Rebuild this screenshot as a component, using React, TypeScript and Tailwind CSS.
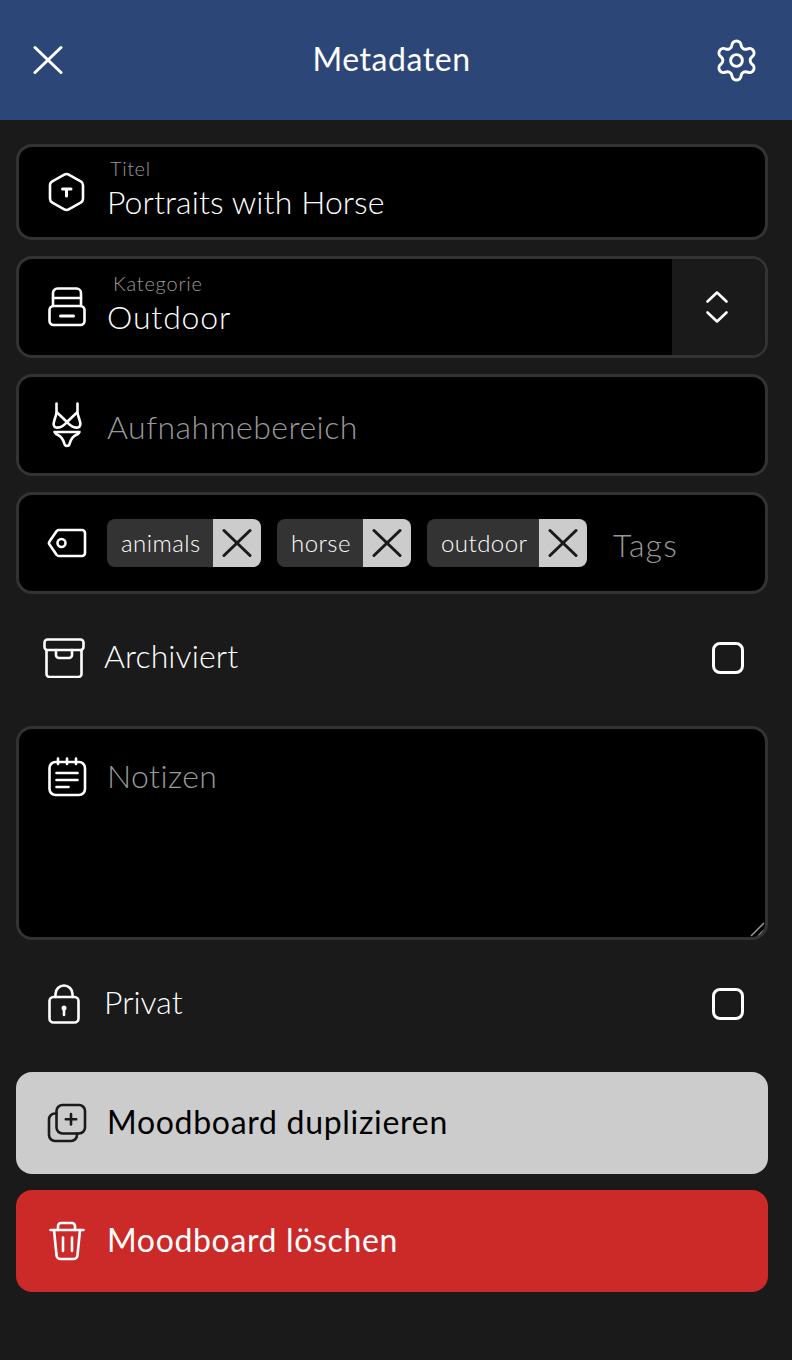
import React from "react";
import { Settings } from "lucide-react";

const S = ({ children, w = 40, h = 40, color = "#fff", sw = 2.6 }: { children: React.ReactNode; w?: number; h?: number; color?: string; sw?: number }) => (
  <svg width={w} height={h} viewBox={`0 0 ${w} ${h}`} fill="none" stroke={color} strokeWidth={sw} strokeLinecap="round" strokeLinejoin="round" className="shrink-0">
    {children}
  </svg>
);

const XIcon = ({ size = 30, color = "#fff", sw = 3 }: { size?: number; color?: string; sw?: number }) => (
  <S w={size} h={size} color={color} sw={sw}>
    <path d={`M2 2.500L${size - 2} ${size - 2.500}M${size - 2} 2.500L2 ${size - 2.500}`} />
  </S>
);

const HexT = () => (
  <S>
    <path d="M17.300 2.600a4.500 4.500 0 0 1 4.400 0l12 6.800a4.400 4.400 0 0 1 2.300 3.800v13.600a4.400 4.400 0 0 1-2.300 3.800l-12 6.800a4.500 4.500 0 0 1-4.400 0l-12-6.800a4.400 4.400 0 0 1-2.300-3.800V13.200a4.400 4.400 0 0 1 2.300-3.800z" />
    <path d="M15.500 17h8.500M19.500 17v7" strokeWidth={3} />
  </S>
);

const Drawer = () => (
  <S>
    <rect x="2.500" y="19" width="35" height="19" rx="4" />
    <path d="M6 19V6a4.500 4.500 0 0 1 4.500-4.500h19A4.500 4.500 0 0 1 34 6v13" />
    <path d="M6 11h28" />
    <path d="M13.500 29h13" strokeWidth={3} />
  </S>
);

const Bikini = () => (
  <S w={40} h={46}>
    <path d="M9.500 1.500V10L20 20c-4 5-8 6-11 5.500-2.500-.5-3-3.500-1.500-7.500.7-3 2-5 2-8" />
    <path d="M30.500 1.500V10L20 20c4 5 8 6 11 5.500 2.500-.5 3-3.500 1.500-7.500-.7-3-2-5-2-8" />
    <path d="M7.500 30h25c-.5 1-1 2-2.500 2.500-3.500 1.300-6 4-7.500 9.500-.6 2.500-4.400 2.500-5 0-1.500-5.500-4-8.200-7.500-9.500-1.500-.5-2-1.500-2.500-2.500z" />
  </S>
);

const TagIcon = () => (
  <S>
    <path d="M12 7h23a3 3 0 0 1 3 3v20a3 3 0 0 1-3 3H12a3 3 0 0 1-2.300-1L2.500 21.500a2.500 2.500 0 0 1 0-3L9.700 8a3 3 0 0 1 2.300-1z" />
    <circle cx="14.500" cy="20" r="4" />
  </S>
);

const Archive = () => (
  <S w={44} h={40}>
    <rect x="1.500" y="1.500" width="39" height="10.500" rx="3" />
    <path d="M3.500 12v24a3 3 0 0 0 3 3h29a3 3 0 0 0 3-3V12" />
    <path d="M13 12v5a3 3 0 0 0 3 3h10a3 3 0 0 0 3-3v-5" />
  </S>
);

const Notebook = () => (
  <S>
    <rect x="2.500" y="5" width="35.500" height="33" rx="6" />
    <path d="M11 1.500V7M20 1.500V7M29 1.500V7" />
    <path d="M9.500 16h21M9.500 23h21M9.500 30h12" />
  </S>
);

const Lock = () => (
  <S w={32} h={40}>
    <rect x="1.500" y="13" width="29" height="25.500" rx="4" />
    <path d="M7.500 13v-3a8.500 8.500 0 0 1 17 0v3" />
    <circle cx="16" cy="24" r="2.500" fill="#fff" stroke="none" />
    <path d="M16 25v6" />
  </S>
);

const Duplicate = () => (
  <S color="#1a1a1a">
    <rect x="9.500" y="2" width="28.500" height="28.500" rx="6" />
    <path d="M9.500 10.500H8a6 6 0 0 0-6 6V32a6 6 0 0 0 6 6h16a6 6 0 0 0 6-6v-1.500" />
    <path d="M24 11v10.500M18.800 16.300h10.400" />
  </S>
);

const Trash = () => (
  <S>
    <path d="M3.500 9h33" />
    <path d="M11 9V5a3 3 0 0 1 3-3h11a3 3 0 0 1 3 3v4" />
    <path d="M7 9l2.500 25a4 4 0 0 0 4 4h13a4 4 0 0 0 4-4L33 9" />
    <path d="M16 16.500V30M25 16.500V30" />
  </S>
);

const Chevrons = () => (
  <svg width="24" height="36" viewBox="0 0 24 36" fill="none" stroke="#fff" strokeWidth="2.600" strokeLinecap="round" strokeLinejoin="round">
    <path d="M2.500 12.500L12 3.500l9.500 9" />
    <path d="M2.500 23.500l9.500 9 9.500-9" />
  </svg>
);

const Field = ({ children, className = "" }: { children: React.ReactNode; className?: string }) => (
  <div className={`flex overflow-hidden rounded-2xl border-[3px] border-[#333333] bg-black ${className}`}>{children}</div>
);

const Chip = ({ label, width }: { label: string; width: string }) => (
  <div className="flex h-12 items-stretch overflow-hidden rounded-lg">
    <span className={`flex items-center bg-[#333333] pl-[14px] text-2xl font-light tracking-[0.45px] text-white ${width}`}>{label}</span>
    <span className="flex w-12 items-center justify-center bg-[#cccccc]">
      <XIcon size={30} color="#1a1a1a" sw={3} />
    </span>
  </div>
);

const Check = () => <span className="h-8 w-8 rounded-lg border-[3px] border-white" />;

export default function App() {
  return (
    <div className="min-h-[1360px] bg-[#1a1a1a] font-['Lato',sans-serif] font-light text-white">
      <header className="flex h-[120px] items-center justify-between bg-[#2c4678] pl-[33px] pr-[32px]">
        <XIcon />
        <h1 className="ml-[7px] pb-[2px] text-[32px] font-normal leading-none tracking-[0.55px]">Metadaten</h1>
        <Settings size={47} strokeWidth={1.500} />
      </header>
      <main className="flex flex-col gap-4 pl-4 pr-6 pt-6">
        <Field className="h-24 items-center pl-7">
          <HexT />
          <div className="ml-5 flex flex-col pb-1">
            <span className="pl-[3px] text-xl leading-[24px] tracking-[0.6px] text-[#999999]">Titel</span>
            <span className="text-[32px] leading-[44px] tracking-[0.1px]">Portraits with Horse</span>
          </div>
        </Field>
        <Field className="h-[102px]">
          <div className="flex flex-1 items-center pl-7">
            <Drawer />
            <div className="ml-5 flex flex-col pb-1">
              <span className="pl-[6px] text-xl leading-[24px] tracking-[0.8px] text-[#999999]">Kategorie</span>
              <span className="text-[32px] leading-[44px] tracking-[0.85px]">Outdoor</span>
            </div>
          </div>
          <div className="flex w-[93px] items-center justify-center bg-[#1a1a1a] pr-[3px]">
            <Chevrons />
          </div>
        </Field>
        <Field className="h-[102px] items-center pl-7">
          <Bikini />
          <span className="ml-5 pt-1 text-[32px] tracking-[0.5px] text-[#999999]">Aufnahmebereich</span>
        </Field>
        <Field className="h-[102px] items-center gap-4 pl-7">
          <div className="mr-1">
            <TagIcon />
          </div>
          <Chip label="animals" width="w-[106px]" />
          <Chip label="horse" width="w-[86px]" />
          <Chip label="outdoor" width="w-[112px]" />
          <span className="ml-[10px] pt-1 text-[32px] tracking-[1.2px] text-[#999999]">Tags</span>
        </Field>
        <div className="mb-1 flex h-24 items-center pl-[27px] pr-6">
          <Archive />
          <span className="ml-[17px] flex-1 pb-1 text-[32px] tracking-[0.1px]">Archiviert</span>
          <Check />
        </div>
        <Field className="relative h-[214px] items-start pl-7 pt-7">
          <Notebook />
          <span className="ml-5 text-[32px] leading-[38px] tracking-[0.4px] text-[#999999]">Notizen</span>
          <svg className="absolute bottom-0 right-0" width="16" height="16" viewBox="0 0 16 16" stroke="#999" strokeWidth="1.500">
            <path d="M2 15L15 2M9 15l6-6" />
          </svg>
        </Field>
        <div className="mb-1 flex h-24 items-center pl-8 pr-6">
          <Lock />
          <span className="ml-6 flex-1 pb-1 text-[32px]">Privat</span>
          <Check />
        </div>
        <button className="flex h-[102px] items-center rounded-2xl bg-[#cccccc] pl-[31px] text-[32px] font-normal text-black">
          <Duplicate />
          <span className="ml-5 pb-[2px] tracking-[0.7px]">Moodboard duplizieren</span>
        </button>
        <button className="flex h-[102px] items-center rounded-2xl bg-[#cc2929] pl-[31px] text-[32px] font-normal text-white">
          <Trash />
          <span className="ml-5 pb-[2px] tracking-[0.65px]">Moodboard löschen</span>
        </button>
      </main>
    </div>
  );
}
